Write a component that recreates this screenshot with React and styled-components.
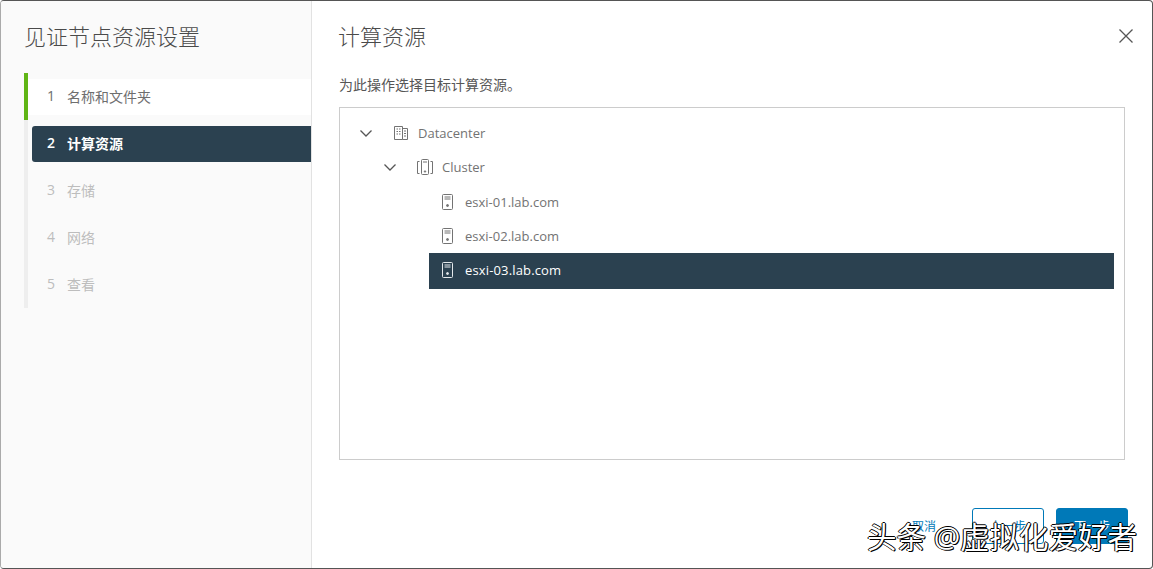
import React from 'react';
import styled, {createGlobalStyle} from 'styled-components';

const GlobalStyle = createGlobalStyle`
    html, body {
        margin: 0;
        padding: 0;
        background: #fff;
    }
    body {
        font-family: "Open Sans", "Noto Sans CJK SC", sans-serif;
    }
`;

const steps = [
    {num: 1, label: '名称和文件夹', state: 'done'},
    {num: 2, label: '计算资源', state: 'active'},
    {num: 3, label: '存储', state: 'todo'},
    {num: 4, label: '网络', state: 'todo'},
    {num: 5, label: '查看', state: 'todo'}
];

const hosts = [
    {name: 'esxi-01.lab.com'},
    {name: 'esxi-02.lab.com'},
    {name: 'esxi-03.lab.com', selected: true}
];

const Chevron = () => (
    <svg width="14" height="14" viewBox="0 0 14 14" fill="none" stroke="#565656" strokeWidth="1.3">
        <path d="M1.5 4.5 L7 10 L12.5 4.5"/>
    </svg>
);

const DatacenterIcon = () => (
    <svg width="16" height="16" viewBox="0 0 16 16" fill="none" stroke="#737373" strokeWidth="1">
        <path d="M1.5 1.5 H9.5 V14.5 H1.5 Z"/>
        <path d="M9.5 3.5 H14.5 V14.5 H9.5"/>
        <path d="M3.5 4 H5 M6 4 H7.5 M3.5 6.5 H5 M6 6.5 H7.5 M3.5 9 H5 M6 9 H7.5 M11 6 H13 M11 8.5 H13 M11 11 H13"/>
    </svg>
);

const ClusterIcon = () => (
    <svg width="16" height="16" viewBox="0 0 16 16" fill="none" stroke="#737373" strokeWidth="1">
        <path d="M2.5 2.5 H0.5 V14.5 H2.5 M13.5 2.5 H15.5 V14.5 H13.5"/>
        <rect x="4.5" y="0.5" width="7" height="15" rx="1"/>
        <path d="M6 3 H10"/>
        <circle cx="8" cy="12.5" r="0.7" fill="#737373"/>
    </svg>
);

const HostIcon = ({light}) => {
    const color = light ? '#e4e9ec' : '#737373';
    return (
        <svg width="11" height="16" viewBox="0 0 11 16" fill="none" stroke={color} strokeWidth="1">
            <rect x="0.5" y="0.5" width="10" height="15" rx="1"/>
            <path d="M2.5 3 H8.5 M2.5 5 H8.5"/>
            <circle cx="5.5" cy="11.5" r="1" fill={color}/>
        </svg>
    );
};

const CloseIcon = () => (
    <svg width="16" height="16" viewBox="0 0 16 16" fill="none" stroke="#565656" strokeWidth="1.3">
        <path d="M1.5 1.5 L14.5 14.5 M14.5 1.5 L1.5 14.5"/>
    </svg>
);

class App extends React.Component {
    render() {
        return (
            <Dialog>
                <GlobalStyle/>
                <Sidebar>
                    <SideTitle>见证节点资源设置</SideTitle>
                    <StepList>
                        {steps.map(step => (
                            <Step key={step.num} state={step.state}>
                                <StepBody state={step.state}>
                                    <StepNum>{step.num}</StepNum>
                                    {step.label}
                                </StepBody>
                            </Step>
                        ))}
                    </StepList>
                </Sidebar>
                <Main>
                    <MainHeader>
                        <MainTitle>计算资源</MainTitle>
                        <CloseButton><CloseIcon/></CloseButton>
                    </MainHeader>
                    <Hint>为此操作选择目标计算资源。</Hint>
                    <TreeBox>
                        <TreeRow depth={0}>
                            <Toggle><Chevron/></Toggle>
                            <NodeIcon><DatacenterIcon/></NodeIcon>
                            Datacenter
                        </TreeRow>
                        <TreeRow depth={1}>
                            <Toggle><Chevron/></Toggle>
                            <NodeIcon><ClusterIcon/></NodeIcon>
                            Cluster
                        </TreeRow>
                        {hosts.map(host => (
                            <HostRow key={host.name} selected={host.selected}>
                                <HostIconWrap><HostIcon light={host.selected}/></HostIconWrap>
                                {host.name}
                            </HostRow>
                        ))}
                    </TreeBox>
                    <Footer>
                        <LinkButton>取消</LinkButton>
                        <OutlineButton>上一步</OutlineButton>
                        <PrimaryButton>下一步</PrimaryButton>
                    </Footer>
                </Main>
                <Watermark>头条 @虚拟化爱好者</Watermark>
            </Dialog>
        );
    }
}

export default App;

const Dialog = styled.div`
    position: relative;
    box-sizing: border-box;
    width: 1153px;
    height: 569px;
    display: flex;
    overflow: hidden;
    background: #fff;
    border: 1px solid #555;
    border-left-color: #aaa;
    border-radius: 4px;
`;

const Sidebar = styled.aside`
    box-sizing: border-box;
    width: 311px;
    flex-shrink: 0;
    padding: 0 0 0 23px;
    background: #fafafa;
    border-right: 1px solid #e2e2e2;
`;

const SideTitle = styled.h1`
    margin: 0;
    height: 72px;
    line-height: 71px;
    font-size: 22px;
    font-weight: 300;
    color: #4a4a4a;
`;

const StepList = styled.div`
    display: flex;
    flex-direction: column;
    border-left: 4px solid #eee;
`;

const Step = styled.div`
    position: relative;
    height: 47px;
    display: flex;
    align-items: center;
    ${props => props.state === 'done' && `
        &::before {
            content: '';
            position: absolute;
            left: -4px;
            top: 0;
            bottom: 0;
            width: 4px;
            background: #60b515;
        }
    `}
`;

const StepBody = styled.div`
    box-sizing: border-box;
    flex: 1;
    display: flex;
    align-items: center;
    height: 36px;
    padding-bottom: 2px;
    font-size: 14px;
    padding-left: 19px;
    ${props => props.state === 'done' && `
        background: #fff;
        color: #6e6e6e;
    `}
    ${props => props.state === 'active' && `
        margin-left: 4px;
        padding-left: 15px;
        background: #2b4150;
        border-radius: 3px 0 0 3px;
        color: #fff;
        font-weight: 600;
    `}
    ${props => props.state === 'todo' && `
        color: #bdbdbd;
    `}
`;

const StepNum = styled.span`
    width: 20px;
    font-size: 14px;
`;

const Main = styled.main`
    flex: 1;
    min-width: 0;
    display: flex;
    flex-direction: column;
    padding: 0 24px 0 27px;
`;

const MainHeader = styled.div`
    height: 70px;
    display: flex;
    justify-content: space-between;
    align-items: center;
`;

const MainTitle = styled.h2`
    margin: -3px 0 0 -1px;
    font-size: 22px;
    font-weight: 300;
    color: #4a4a4a;
`;

const CloseButton = styled.button`
    display: flex;
    margin-right: -6px;
    padding: 0;
    border: 0;
    background: none;
`;

const Hint = styled.p`
    margin: 0;
    height: 36px;
    line-height: 27px;
    font-size: 14px;
    color: #565656;
`;

const TreeBox = styled.div`
    box-sizing: border-box;
    width: 786px;
    height: 353px;
    padding: 8px 10px 0 0;
    border: 1px solid #ccc;
`;

const TreeRow = styled.div`
    height: 34.3px;
    display: flex;
    align-items: center;
    padding-left: ${props => 19 + props.depth * 24}px;
    font-size: 13px;
    color: #737373;
`;

const Toggle = styled.span`
    display: flex;
    width: 34px;
`;

const NodeIcon = styled.span`
    display: flex;
    width: 25px;
`;

const HostRow = styled.div`
    height: 34.3px;
    display: flex;
    align-items: center;
    margin-left: 89px;
    padding-left: 13px;
    font-size: 13px;
    color: #737373;
    ${props => props.selected && `
        box-sizing: border-box;
        height: 36px;
        padding-bottom: 2px;
        background: #2b4150;
        color: #fff;
        font-weight: 500;
        letter-spacing: 0.15px;
    `}
`;

const HostIconWrap = styled.span`
    display: flex;
    width: 23px;
`;

const Footer = styled.div`
    display: flex;
    justify-content: flex-end;
    align-items: center;
    gap: 12px;
    margin-top: 48px;
`;

const BaseButton = styled.button`
    box-sizing: border-box;
    width: 72px;
    height: 36px;
    padding: 0;
    border-radius: 3px;
    font-family: inherit;
    font-size: 12px;
`;

const LinkButton = styled(BaseButton)`
    width: 30px;
    margin-right: 21px;
    border: 0;
    background: none;
    color: #0079b8;
`;

const OutlineButton = styled(BaseButton)`
    border: 1px solid #0079b8;
    background: #fff;
    color: #0079b8;
`;

const PrimaryButton = styled(BaseButton)`
    border: 1px solid #0079b8;
    background: #0079b8;
    color: #fff;
`;

const Watermark = styled.div`
    position: absolute;
    left: 866px;
    top: 518px;
    font-size: 29.5px;
    line-height: 36px;
    white-space: nowrap;
    color: #fff;
    text-shadow: 1px 1px 0 #000, -1px 0 0 #000, 0 -1px 0 #000, 1px 0 0 #000;
`;
